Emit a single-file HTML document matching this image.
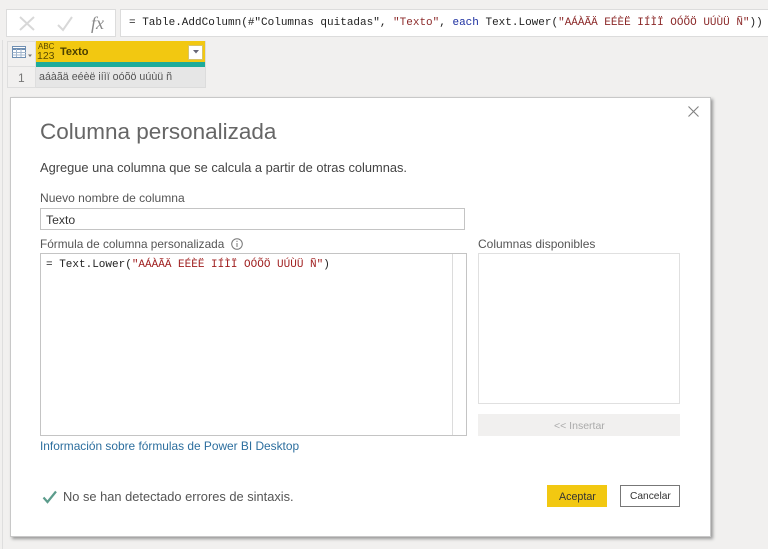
<!DOCTYPE html>
<html><head><meta charset="utf-8">
<style>
html,body{margin:0;padding:0;width:768px;height:549px;overflow:hidden;background:#f1f0ef}
body{position:relative;font-family:"Liberation Sans",sans-serif;color:#333}
.a{position:absolute;white-space:nowrap;line-height:1}
.box{position:absolute;box-sizing:border-box}
.m{font-family:"Liberation Mono",monospace;font-size:11px;letter-spacing:0}
.s{color:#8c2a2a}
</style></head><body>
<div class="box" style="left:2px;top:40px;width:1px;height:509px;background:#dedede"></div>
<div class="box" style="left:6px;top:9px;width:110px;height:28px;background:#fff;border:1px solid #dcdcdc"></div>
<svg class="box" style="left:0;top:0" width="120" height="40">
<path d="M20 17 L34 30 M34 17 L20 30" stroke="#d8d8d8" stroke-width="2" fill="none"/>
<path d="M58 25 L63 30 L72 17" stroke="#d8d8d8" stroke-width="2" fill="none"/>
<text x="91" y="29" font-family="Liberation Serif" font-style="italic" font-size="18" fill="#8a8a8a">fx</text>
</svg>
<div class="box" style="left:120px;top:9px;width:648px;height:28px;background:#fff;border:1px solid #dcdcdc;border-right:0"></div>
<div class="a m" style="left:129px;top:18px;color:#222">= Table.AddColumn(#"Columnas quitadas", <span class="s">"Texto"</span>, <span style="color:#1c2fa0">each</span> Text.Lower(<span class="s">"AÁÀÃÄ EÉÈË IÍÌÏ OÓÕÖ UÚÙÜ Ñ"</span>))</div>

<div class="box" style="left:7px;top:41px;width:199px;height:47px;background:#e6e6e6;border:1px solid #dcdcdc"></div>
<div class="box" style="left:7px;top:41px;width:29px;height:25px;background:#f1f0ef;border:1px solid #dedede;border-bottom:0"></div>
<div class="box" style="left:7px;top:66px;width:29px;height:22px;background:#f1f0ef;border:1px solid #dedede"></div>
<svg class="box" style="left:11px;top:45px" width="22" height="15">
<rect x="1.500" y="1.500" width="13" height="11" fill="#fff" stroke="#6f8fb2"/>
<path d="M1 4H15" stroke="#6f8fb2" stroke-width="2"/>
<path d="M1.500 7.500H15M1.500 10H15M5.500 4V12M10 4V12" stroke="#a0b5cc" stroke-width="1"/>
<path d="M17 9.500H21L19 12Z" fill="#777"/>
</svg>
<div class="box" style="left:36px;top:41px;width:169px;height:21px;background:#f2c811"></div>
<div class="box" style="left:36px;top:62px;width:169px;height:5px;background:#1eab9a"></div>
<div class="a" style="left:38px;top:43px;font-size:8px;color:#5a4a00">ABC</div>
<div class="a" style="left:37px;top:51px;font-size:10.500px;color:#5a4a00">123</div>
<div class="a" style="left:60px;top:47px;font-size:11px;font-weight:bold;color:#4a3f00">Texto</div>
<div class="box" style="left:188px;top:45px;width:15px;height:15px;background:#fff;border:1px solid #d8c466"></div>
<svg class="box" style="left:193px;top:50px" width="6" height="5"><path d="M0 0H6L3 3.500Z" fill="#667"/></svg>
<div class="a" style="left:18px;top:72px;font-size:12px;color:#777">1</div>
<div class="a" style="left:39px;top:72px;font-size:10.700px;color:#555;">aáàãä eéèë iíìï oóõö uúùü ñ</div>

<div class="box" style="left:10px;top:97px;width:701px;height:440px;background:#fff;border:1px solid #c8c8c8;box-shadow:2px 2px 3px #999"></div>
<svg class="box" style="left:686px;top:104px" width="16" height="16"><path d="M2.500 2.500L12.500 12.500M12.500 2.500L2.500 12.500" stroke="#808080" stroke-width="1.100" fill="none"/></svg>
<div class="a" style="left:40px;top:121px;font-size:22.500px;color:#666;">Columna personalizada</div>
<div class="a" style="left:40px;top:162px;font-size:12.850px;color:#444">Agregue una columna que se calcula a partir de otras columnas.</div>
<div class="a" style="left:40px;top:192px;font-size:12.050px;color:#555">Nuevo nombre de columna</div>
<div class="box" style="left:40px;top:208px;width:425px;height:22px;border:1px solid #c4c4c4"></div>
<div class="a" style="left:46px;top:214px;font-size:12.200px;color:#333">Texto</div>
<div class="a" style="left:40px;top:239px;font-size:11.800px;color:#555">Fórmula de columna personalizada</div>
<svg class="box" style="left:230px;top:237px" width="14" height="14"><circle cx="7" cy="7" r="5.300" fill="none" stroke="#777"/><path d="M7 6V10M7 3.800V5" stroke="#777" fill="none"/></svg>
<div class="box" style="left:40px;top:253px;width:427px;height:183px;border:1px solid #c4c4c4"></div>
<div class="box" style="left:452px;top:254px;width:1px;height:181px;background:#dcdcdc"></div>
<div class="a m" style="left:46px;top:260px;color:#222">= Text.Lower(<span class="s" style="color:#a02020">"AÁÀÃÄ EÉÈË IÍÌÏ OÓÕÖ UÚÙÜ Ñ"</span>)</div>
<div class="a" style="left:478px;top:238px;font-size:12px;color:#555">Columnas disponibles</div>
<div class="box" style="left:478px;top:253px;width:202px;height:151px;border:1px solid #e0e0e0"></div>
<div class="box" style="left:478px;top:414px;width:202px;height:22px;background:#f1f0ef"></div>
<div class="a" style="left:554px;top:421px;font-size:10.500px;color:#aaa">&lt;&lt; Insertar</div>
<div class="a" style="left:40px;top:441px;font-size:11.900px;color:#2c6e9e">Información sobre fórmulas de Power BI Desktop</div>
<svg class="box" style="left:41px;top:489px" width="18" height="16"><path d="M2.500 8.500L6.500 13L15 2.500" stroke="#5c9c8c" stroke-width="2.200" fill="none"/></svg>
<div class="a" style="left:63px;top:491px;font-size:12.850px;color:#555">No se han detectado errores de sintaxis.</div>
<div class="box" style="left:547px;top:485px;width:60px;height:22px;background:#f2c811"></div>
<div class="a" style="left:559px;top:492px;font-size:10.700px;color:#333">Aceptar</div>
<div class="box" style="left:620px;top:485px;width:60px;height:22px;border:1px solid #777;background:#fff"></div>
<div class="a" style="left:630px;top:492px;font-size:10.200px;color:#333">Cancelar</div>
</body></html>
